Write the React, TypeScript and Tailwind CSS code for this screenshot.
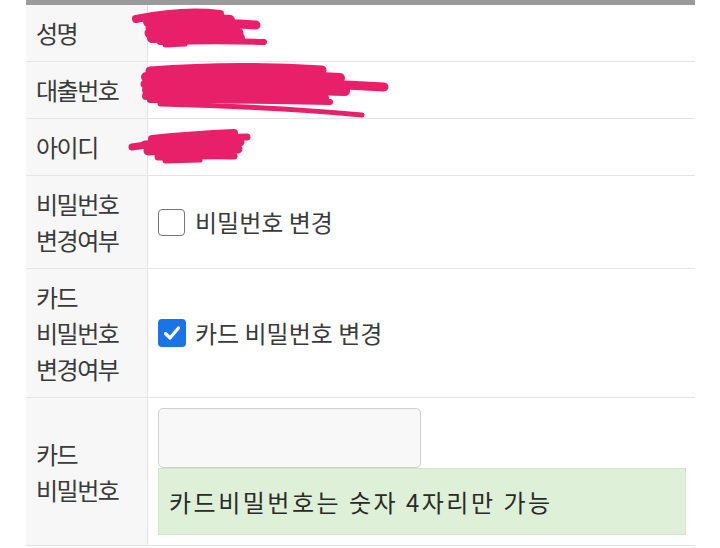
import React from "react";

const font = { fontFamily: '"Noto Sans CJK KR", "Noto Sans", sans-serif' };

function Row({ label, children }: { label: React.ReactNode; children?: React.ReactNode }) {
  return (
    <div className="flex border-b border-[#e2e4e6]">
      <div className="w-[122px] shrink-0 bg-[#f7f7f7] border-r border-[#e2e4e6] px-[10px] py-[10px] flex items-center text-[24px] leading-[36px] tracking-[-1.5px] text-[#3a3a3a]">
        <div>{label}</div>
      </div>
      <div className="flex-1 py-[10px] pl-[10px] pr-[9px] flex items-center text-[24px] leading-[36px] text-[#3a3a3a]">
        {children}
      </div>
    </div>
  );
}

function Check({ checked }: { checked?: boolean }) {
  if (checked) {
    return (
      <div className="w-[28px] h-[28px] rounded-[4px] bg-[#1a73e8] flex items-center justify-center shrink-0">
        <svg width="18" height="16" viewBox="0 0 18 16">
          <path d="M2.5 8.5 L7 13 L15.5 3" fill="none" stroke="white" strokeWidth="3.2" strokeLinecap="round" strokeLinejoin="round" />
        </svg>
      </div>
    );
  }
  return <div className="w-[27px] h-[27px] rounded-[4px] border-[1.5px] border-[#767676] bg-white shrink-0" />;
}

export default function App() {
  return (
    <div className="relative w-[720px] h-[548px] bg-white overflow-hidden" style={font}>
      <div className="ml-[26px] w-[669px]">
        <div className="h-[5px] bg-[#9a9a9a]" />
        <Row label="성명" />
        <Row label="대출번호" />
        <Row label="아이디" />
        <Row label={<>비밀번호<br />변경여부</>}>
          <div className="flex items-center gap-[10px]">
            <Check />
            <span>비밀번호 변경</span>
          </div>
        </Row>
        <Row label={<>카드<br />비밀번호<br />변경여부</>}>
          <div className="flex items-center gap-[9px]">
            <Check checked />
            <span>카드 비밀번호 변경</span>
          </div>
        </Row>
        <Row label={<>카드<br />비밀번호</>}>
          <div className="flex flex-col w-full">
            <div className="w-[263px] h-[60px] rounded-[5px] border border-[#cfcfcf] bg-[#f8f8f8]" />
            <div className="w-[528px] h-[67px] bg-[#dff0d8] border border-[#d3e6cb] flex items-center pl-[10px] tracking-[2.5px] text-[#2a2a2a]">
              카드비밀번호는 숫자 4자리만 가능
            </div>
          </div>
        </Row>
      </div>
      <svg className="absolute left-0 top-0 pointer-events-none" width="720" height="548" viewBox="0 0 720 548">
        <g fill="none" stroke="#e8206a" strokeLinecap="round" strokeLinejoin="round">
          <path d="M136 19 C165 13 195 11 220 14" strokeWidth="8" />
          <path d="M148 22 C180 18 205 17 230 20" strokeWidth="10" />
          <path d="M150 28 C185 24 225 22 256 25" strokeWidth="9" />
          <path d="M150 33 C180 31 210 30 238 33" strokeWidth="11" />
          <path d="M152 38 C185 37 215 37 240 38" strokeWidth="10" />
          <path d="M160 42 C200 41 235 41 264 42" strokeWidth="6" />
          <path d="M165 45 L185 44" strokeWidth="5" />

          <path d="M150 71 C200 67 260 66 322 70" strokeWidth="9" />
          <path d="M146 77 C210 73 280 74 340 78" strokeWidth="10" />
          <path d="M145 84 C220 81 300 82 384 87" strokeWidth="9" />
          <path d="M147 90 C220 88 290 89 345 91" strokeWidth="10" />
          <path d="M146 96 C210 95 270 96 325 98" strokeWidth="8" />
          <path d="M150 100 C220 100 280 101 330 102" strokeWidth="6" />
          <path d="M160 104 C240 106 310 110 362 115" strokeWidth="5" />

          <path d="M132 147 C170 141 210 137 247 137" strokeWidth="7" />
          <path d="M152 139 C180 136 210 134 234 133" strokeWidth="8" />
          <path d="M145 145 C180 142 210 141 240 142" strokeWidth="9" />
          <path d="M148 151 C180 149 210 148 238 149" strokeWidth="9" />
          <path d="M158 157 C190 156 215 155 234 156" strokeWidth="7" />
          <path d="M165 161 L200 160" strokeWidth="5" />
        </g>
      </svg>
    </div>
  );
}
